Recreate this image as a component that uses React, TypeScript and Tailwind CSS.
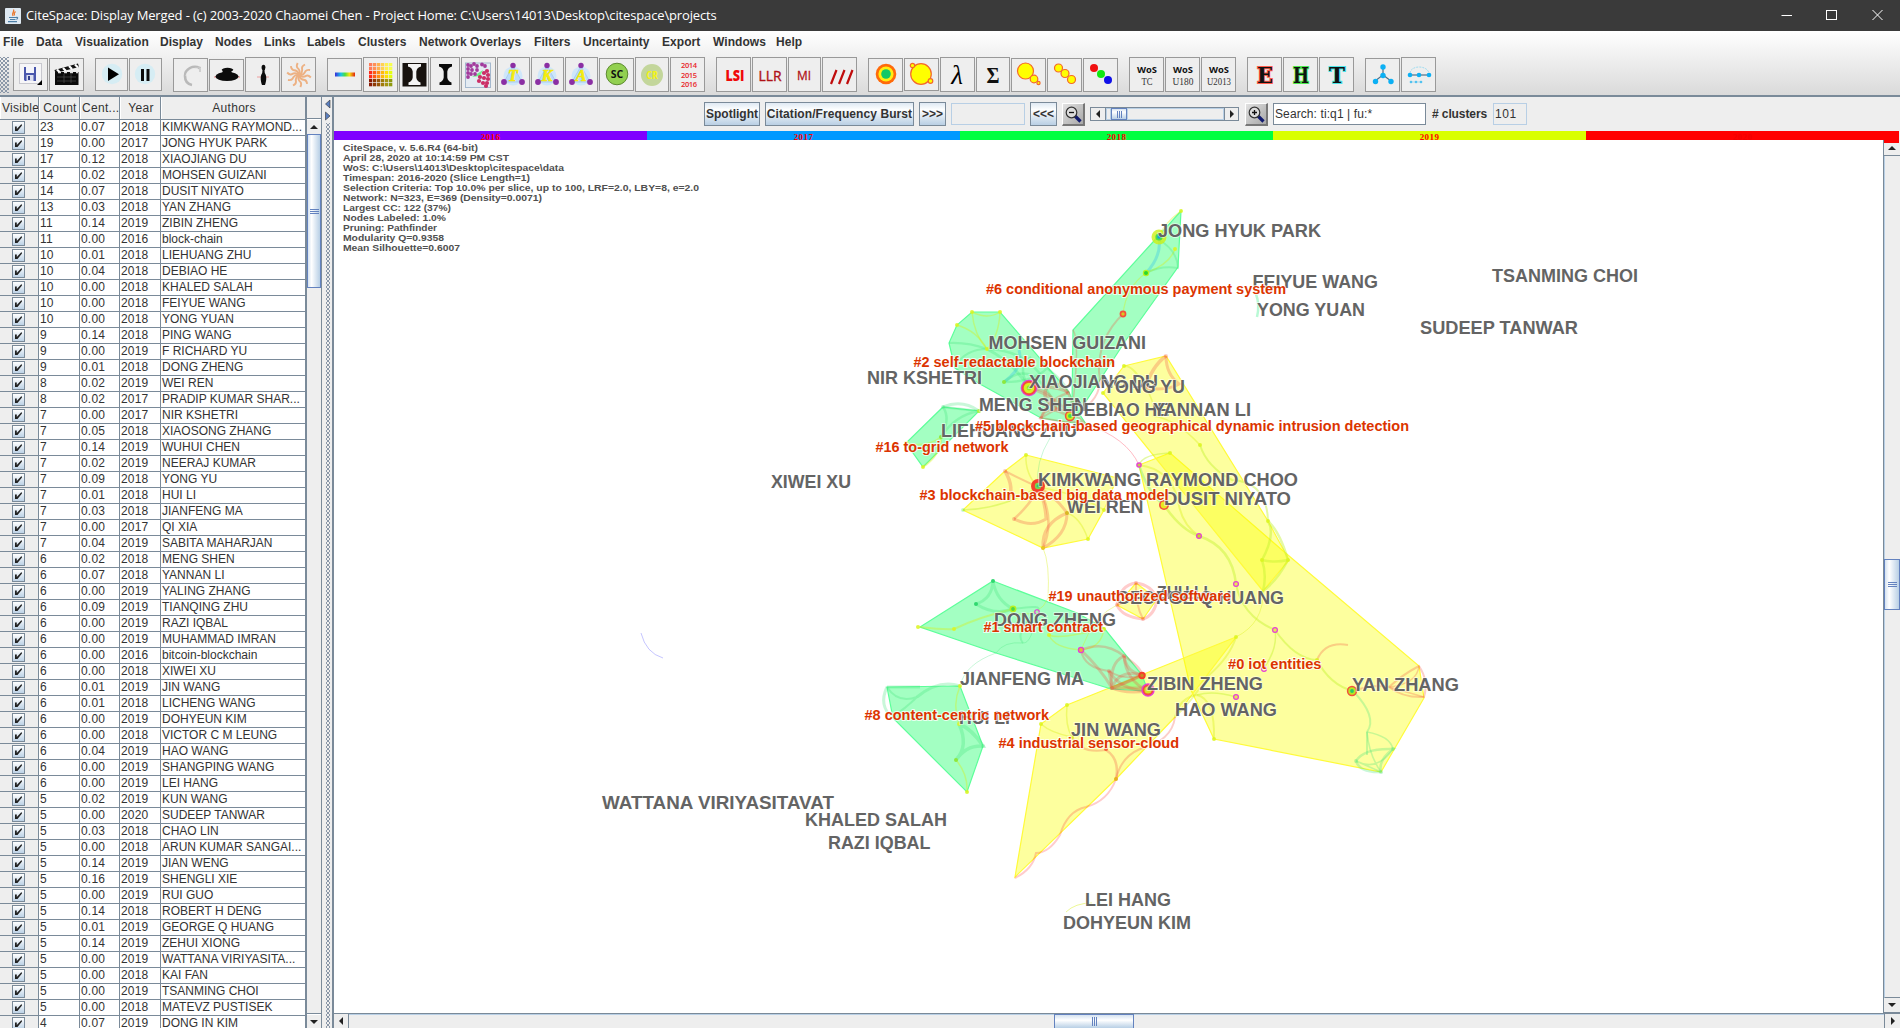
import React from "react";

const MENU: [string, string][] = [
  ["File", "w-[33px]"],
  ["Data", "w-[39px]"],
  ["Visualization", "w-[85px]"],
  ["Display", "w-[55px]"],
  ["Nodes", "w-[49px]"],
  ["Links", "w-[43px]"],
  ["Labels", "w-[51px]"],
  ["Clusters", "w-[61px]"],
  ["Network Overlays", "w-[115px]"],
  ["Filters", "w-[49px]"],
  ["Uncertainty", "w-[79px]"],
  ["Export", "w-[51px]"],
  ["Windows", "w-[63px]"],
  ["Help", "w-[40px]"],
];

const ROWS = `23|0.07|2018|KIMKWANG RAYMOND...
19|0.00|2017|JONG HYUK PARK
17|0.12|2018|XIAOJIANG DU
14|0.02|2018|MOHSEN GUIZANI
14|0.07|2018|DUSIT NIYATO
13|0.03|2018|YAN ZHANG
11|0.14|2019|ZIBIN ZHENG
11|0.00|2016|block-chain
10|0.01|2018|LIEHUANG ZHU
10|0.04|2018|DEBIAO HE
10|0.00|2018|KHALED SALAH
10|0.00|2018|FEIYUE WANG
10|0.00|2018|YONG YUAN
9|0.14|2018|PING WANG
9|0.00|2019|F RICHARD YU
9|0.01|2018|DONG ZHENG
8|0.02|2019|WEI REN
8|0.02|2017|PRADIP KUMAR SHAR...
7|0.00|2017|NIR KSHETRI
7|0.05|2018|XIAOSONG ZHANG
7|0.14|2019|WUHUI CHEN
7|0.02|2019|NEERAJ KUMAR
7|0.09|2018|YONG YU
7|0.01|2018|HUI LI
7|0.03|2018|JIANFENG MA
7|0.00|2017|QI XIA
7|0.04|2019|SABITA MAHARJAN
6|0.02|2018|MENG SHEN
6|0.07|2018|YANNAN LI
6|0.00|2019|YALING ZHANG
6|0.09|2019|TIANQING ZHU
6|0.00|2019|RAZI IQBAL
6|0.00|2019|MUHAMMAD IMRAN
6|0.00|2016|bitcoin-blockchain
6|0.00|2018|XIWEI XU
6|0.01|2019|JIN WANG
6|0.01|2018|LICHENG WANG
6|0.00|2019|DOHYEUN KIM
6|0.00|2018|VICTOR C M LEUNG
6|0.04|2019|HAO WANG
6|0.00|2019|SHANGPING WANG
6|0.00|2019|LEI HANG
5|0.02|2019|KUN WANG
5|0.00|2020|SUDEEP TANWAR
5|0.03|2018|CHAO LIN
5|0.00|2018|ARUN KUMAR SANGAI...
5|0.14|2019|JIAN WENG
5|0.16|2019|SHENGLI XIE
5|0.00|2019|RUI GUO
5|0.14|2018|ROBERT H DENG
5|0.01|2019|GEORGE Q HUANG
5|0.14|2019|ZEHUI XIONG
5|0.00|2019|WATTANA VIRIYASITA...
5|0.00|2018|KAI FAN
5|0.00|2019|TSANMING CHOI
5|0.00|2018|MATEVZ PUSTISEK
4|0.07|2019|DONG IN KIM`
  .split("\n")
  .map((r) => r.split("|"));

/* ---------- toolbar icons, drawn on a 35 x 35 grid ---------- */

const txt = (s: string, x: number, y: number, size: number, fill: string, o: any = {}) => (
  <text x={x} y={y} fontSize={size} fill={fill} textAnchor="middle" fontFamily="'Open Sans', sans-serif" {...o}>
    {s}
  </text>
);

const triangle = (s: string) => (
  <g>
    <circle cx="17" cy="19" r="9.5" fill="#cfe7fa" />
    <path d="M17 9L8 25H26Z" fill="#bcdcf8" stroke="#a9cdf2" />
    <circle cx="17" cy="8.500" r="2.700" fill="#8b2fa3" />
    <circle cx="8" cy="25" r="2.900" fill="#8b2fa3" />
    <circle cx="26" cy="25" r="2.900" fill="#8b2fa3" />
    {txt(s, 17, 24, 16, "#f7ee10", { fontFamily: "'Liberation Serif', serif", fontStyle: "italic", fontWeight: 700, stroke: "#f3e80c", strokeWidth: 0.7 })}
  </g>
);

const wos = (s: string) => (
  <g>
    {txt("WoS", 18, 16, 9.5, "#111", { fontWeight: 700, textLength: 20, lengthAdjust: "spacingAndGlyphs" })}
    {txt(s, 18, 28, 10, "#333", {
      fontFamily: "'Liberation Serif', serif",
      textLength: s.length < 3 ? 11 : s.length < 5 ? 21 : 24,
      lengthAdjust: "spacingAndGlyphs",
    })}
  </g>
);

const slab = (s: string, glow: string) => (
  <text x="18" y="26" fontSize="22" fontWeight="700" textAnchor="middle" fill="#111" stroke={glow} strokeWidth="2" textLength="16" lengthAdjust="spacingAndGlyphs" style={{ paintOrder: "stroke" }} fontFamily="'DejaVu Serif', serif">
    {s}
  </text>
);

const gridCells = () => {
  const out: React.ReactNode[] = [];
  const top = ["#ff7a5a", "#ff8f57", "#ffb04e", "#ffd24e", "#fff04e", "#f6ff4e"];
  const mid = ["#ff2a1a", "#ff5a12", "#ff8c10", "#ffb80c", "#ffe000", "#e4ff10"];
  const low = ["#8a1c05", "#8f3a05", "#97560a", "#a07a0a", "#a49410", "#8f9a10"];
  for (let r = 0; r < 6; r++)
    for (let c = 0; c < 6; c++) {
      const pal = r < 2 ? top : r < 4 ? mid : low;
      out.push(<rect key={r * 6 + c} x={6 + c * 4} y={6 + r * 4} width="3.3" height="3.3" fill={pal[c]} />);
    }
  return out;
};

const FLOPPY = (
  <g>
    <rect x="6.500" y="6.500" width="22" height="20" fill="#f6f6f8" stroke="#c8c8cf" />
    <path d="M11 10H23V24H12L11 23Z" fill="#4a57ac" />
    <rect x="13" y="10" width="8" height="6" fill="#f4f5fb" />
    <rect x="13.500" y="18" width="7" height="6" fill="#dcdff0" />
    <rect x="15" y="19" width="2" height="4" fill="#333f8c" />
    <path d="M29 23V28H24Z" fill="#000" />
  </g>
);
const CLAP = (
  <g>
    <path d="M6 15H29.500V28H6Z" fill="#0b0b0b" />
    <path d="M5.500 13L29 6.500L30 10L6.500 16Z" fill="#111" />
    <path d="M8 12.500l3 3M14 11l3 3M20 9l3 3M26 7.500l3 3" stroke="#fff" strokeWidth="2.2" />
    <path d="M9 15.500h3M15 15.500h3M21 15.500h3M27 15.500h2" stroke="#ddd" strokeWidth="1.500" />
    <path d="M8 20h19M8 24h19M15 17v9M22 17v9" stroke="#666" strokeWidth=".5" />
  </g>
);
const PLAY = (
  <g>
    <circle cx="18" cy="17" r="10.200" fill="#d6edf4" />
    <path d="M14 10.500V24L25 17.200Z" fill="#000" />
  </g>
);
const PAUSE = (
  <g>
    <circle cx="17" cy="17" r="10.200" fill="#d6edf4" />
    <path d="M13 12h3v12h-3zM18.500 12h3v12h-3z" fill="#0a0a0a" />
  </g>
);
const HOOK = (
  <g fill="none">
    <path d="M26.500 11C20 8 12 12 12 19C12 24 14 27 19 28" stroke="#b9b9b9" strokeWidth="2.600" />
    <path d="M27 10v5M22 11l6 -.5" stroke="#c6c6c6" strokeWidth="1.500" />
    <path d="M25 12C20 10 14 13 13 19" stroke="#ededed" strokeWidth=".8" />
  </g>
);
const UFO = (
  <g fill="#0c0c0c">
    <path d="M5 20H31" stroke="#e66" strokeWidth=".8" />
    <ellipse cx="18" cy="19.500" rx="11.500" ry="4.600" />
    <ellipse cx="18.500" cy="12.800" rx="5.800" ry="2" />
    <path d="M14 13H22L23 17H13Z" />
  </g>
);
const PIN = (
  <g fill="#0c0c0c">
    <path d="M12 20H24" stroke="#e88" strokeWidth=".8" />
    <ellipse cx="18.500" cy="10.500" rx="1.900" ry="2.800" />
    <path d="M17.600 12h1.800l.4 4C22 19 21.500 24 20 28H17C15.500 24 15 19 17.200 16Z" />
  </g>
);
const SWIRL = (
  <g fill="none" stroke="#edb183" strokeWidth="1.900">
    {[0, 36, 72, 108, 144, 180, 216, 252, 288, 324].map((a) => (
      <path key={a} d="M18 18Q22 16 21 11Q21 9 24 7.500" transform={`rotate(${a} 18 18)`} />
    ))}
  </g>
);
const RAINBOW = (
  <g>
    <defs>
      <linearGradient id="rb">
        <stop offset="0" stopColor="#3a2bd8" />
        <stop offset=".3" stopColor="#18c5ea" />
        <stop offset=".5" stopColor="#4ade40" />
        <stop offset=".72" stopColor="#f5e410" />
        <stop offset="1" stopColor="#e02010" />
      </linearGradient>
    </defs>
    <rect x="8" y="15.500" width="20" height="4" fill="url(#rb)" />
  </g>
);
const vase = (c: string) => (
  <path d="M9 7H22V9.500C19 10 17.800 12 17.300 14.500V20.500C17.600 23 19 24.500 21.500 25.500V28H9.500V25.500C12 24.500 13.400 23 13.700 20.500V14.500C13.200 12 12 10 9 9.500Z" fill={c} />
);
const HOUR_DARK = (
  <g>
    <rect x="3.500" y="6" width="24" height="23.500" fill="#17120e" />
    {vase("#f4f4f4")}
    <path d="M14.300 13h2.500v8h-2.500z" fill="#f4f4f4" />
  </g>
);
const TIMELINE = (
  <g>
    <rect x="4.500" y="6" width="25" height="24.500" fill="#e4ebf2" stroke="#a4b8ce" />
    <path d="M11 20L22 13L19 19Z" fill="#6cf08a" />
    {[[7, 8], [10, 9], [13, 7], [16, 9], [21, 7.500], [24, 9], [7, 12], [11, 13], [16, 13], [7, 16], [10, 17], [7, 20], [14, 17]].map(([x, y], i) => (
      <circle key={i} cx={x} cy={y} r="1.900" fill="#a23a9c" />
    ))}
    {[[26, 14], [23, 16], [27, 18], [19, 20], [23, 21], [27, 22], [18, 24], [22, 26], [26, 26], [25, 29]].map(([x, y], i) => (
      <circle key={i} cx={x} cy={y} r="2.100" fill="#cc2e66" />
    ))}
  </g>
);
const bubble = (x: number, y: number, r: number) => <circle key={`${x}-${y}`} cx={x} cy={y} r={r} fill="#ff0" stroke="#f4692a" strokeWidth="1.200" />;

type Tool = { w: string; h?: string; art: React.ReactNode };
const GROUPS: Tool[][] = [
  [
    { w: "w-[35px]", h: "h-[33px]", art: FLOPPY },
    { w: "w-[35px]", h: "h-[33px]", art: CLAP },
  ],
  [
    { w: "w-[33px]", h: "h-[33px]", art: PLAY },
    { w: "w-[33px]", h: "h-[33px]", art: PAUSE },
  ],
  [
    { w: "w-[35px]", h: "h-[34px]", art: HOOK },
    { w: "w-[35px]", h: "h-[32px]", art: UFO },
    { w: "w-[35px]", art: PIN },
    { w: "w-[35px]", art: SWIRL },
  ],
  [
    { w: "w-[35px]", h: "h-[33px]", art: RAINBOW },
    { w: "w-[35px]", art: gridCells() },
    { w: "w-[30px]", art: HOUR_DARK },
    { w: "w-[30px]", art: vase("#0a0a0a") },
    { w: "w-[35px]", art: TIMELINE },
    { w: "w-[33px]", art: triangle("T") },
    { w: "w-[33px]", art: triangle("K") },
    { w: "w-[33px]", art: triangle("A") },
    {
      w: "w-[35px]",
      h: "h-[33px]",
      art: (
        <g>
          <circle cx="18" cy="17" r="10.800" fill="#92d050" stroke="#5d8a31" />
          {txt("SC", 18, 21, 10.5, "#111", { fontWeight: 700, textLength: 12.5, lengthAdjust: "spacingAndGlyphs" })}
        </g>
      ),
    },
    {
      w: "w-[34px]",
      art: (
        <g>
          <circle cx="17" cy="18" r="11" fill="#c3d69b" />
          {txt("CR", 17, 22, 10.5, "#f4f410", { fontWeight: 700, textLength: 11.500, lengthAdjust: "spacingAndGlyphs" })}
        </g>
      ),
    },
    {
      w: "w-[35px]",
      art: (
        <g>
          {["2014", "2015", "2016"].map((y, i) => (
            <React.Fragment key={y}>{txt(y, 19, 11 + i * 9.5, 7.5, "#e8262a", { fontWeight: 600, textLength: 16 })}</React.Fragment>
          ))}
        </g>
      ),
    },
  ],
  [
    { w: "w-[35px]", art: txt("LSI", 19, 24, 15.500, "#f00808", { fontWeight: 800, textLength: 19, lengthAdjust: "spacingAndGlyphs" }) },
    { w: "w-[35px]", art: txt("LLR", 18, 24, 14.500, "#b01217", { fontWeight: 400, stroke: "#b01217", strokeWidth: 0.4, textLength: 23, lengthAdjust: "spacingAndGlyphs" }) },
    { w: "w-[33px]", art: txt("MI", 17, 23, 13.500, "#b01217", { stroke: "#b01217", strokeWidth: 0.3, textLength: 14, lengthAdjust: "spacingAndGlyphs" }) },
    { w: "w-[35px]", art: <path d="M9 27L14.500 13M17 27L22.500 13M25 27L30.500 13" stroke="#c00c0c" strokeWidth="2.200" /> },
  ],
  [
    {
      w: "w-[35px]",
      h: "h-[34px]",
      art: (
        <g>
          <circle cx="18" cy="17" r="10.300" fill="#ff6a0a" />
          <circle cx="18" cy="17" r="7.600" fill="#ffee10" />
          <circle cx="18" cy="17" r="4.800" fill="#12c866" />
        </g>
      ),
    },
    { w: "w-[35px]", h: "h-[33px]", art: <g>{bubble(17, 17, 10.3)}{bubble(8.5, 8.5, 2.2)}{bubble(26.500, 24, 2.300)}</g> },
    { w: "w-[35px]", art: txt("λ", 17, 27, 27, "#000", { fontFamily: "'Liberation Serif', serif", fontStyle: "italic" }) },
    { w: "w-[34px]", art: txt("Σ", 17, 25.500, 23, "#111", { fontFamily: "'Liberation Serif', serif", fontWeight: 700, textLength: 13, lengthAdjust: "spacingAndGlyphs" }) },
    { w: "w-[35px]", h: "h-[34px]", art: <g>{bubble(14.500, 14, 8)}{bubble(23, 22, 3.800)}{bubble(27.500, 26, 1.600)}</g> },
    { w: "w-[35px]", h: "h-[34px]", art: <g>{bubble(11.500, 11, 4)}{bubble(18, 16.500, 4)}{bubble(24.500, 22.500, 4)}</g> },
    {
      w: "w-[35px]",
      h: "h-[34px]",
      art: (
        <g>
          <circle cx="11" cy="11" r="4" fill="#f01010" />
          <circle cx="18" cy="17" r="4" fill="#10e810" />
          <circle cx="25" cy="23" r="4" fill="#1010e8" />
        </g>
      ),
    },
  ],
  [
    { w: "w-[35px]", art: wos("TC") },
    { w: "w-[35px]", art: wos("U180") },
    { w: "w-[35px]", art: wos("U2013") },
  ],
  [
    { w: "w-[35px]", art: slab("E", "#ff5a4a") },
    { w: "w-[35px]", art: slab("H", "#4ae84a") },
    { w: "w-[35px]", art: slab("T", "#4ae4e8") },
  ],
  [
    {
      w: "w-[35px]",
      h: "h-[34px]",
      art: (
        <g>
          <path d="M18 10V18L10 24M18 18L26 24" stroke="#4d6f86" strokeWidth="1.200" fill="none" />
          {[[18, 10], [18, 18.500], [10.500, 24.500], [26, 24.500]].map(([x, y]) => <circle key={x + y} cx={x} cy={y} r="2.700" fill="#0cb0f4" />)}
        </g>
      ),
    },
    {
      w: "w-[35px]",
      art: (
        <g>
          <path d="M9 16C10 8 26 8 28 16" stroke="#9fdcf0" fill="none" strokeDasharray="2 1" />
          <path d="M9 18H28" stroke="#4d6f86" strokeWidth="1.200" />
          {[9, 18, 28].map((x) => <circle key={x} cx={x} cy="18" r="2.300" fill="#0cb0f4" />)}
          {[10, 15, 20].map((x) => <circle key={x} cx={x} cy="25" r="1.300" fill="#3fbcf0" />)}
          <path d="M9 25H21" stroke="#7fd0f0" strokeWidth=".6" />
        </g>
      ),
    },
  ],
];

/* ---------- graph ---------- */

const GREEN = "rgba(0,255,85,.36)";
const YELLOW = "rgba(250,255,0,.38)";

const HULLS: [string, string, string][] = [
  ["1139,465 1170,453 1282,550 1419,666 1424,698 1381,772 1214,739 1191,690", YELLOW, "#fffb3a"],
  ["1124,366 1166,356 1268,521 1289,560 1263,591 1103,393", YELLOW, "#fffb3a"],
  ["1026,455 1117,478 1104,510 1088,539 1043,548 963,510 1005,471", YELLOW, "#fffb3a"],
  ["1236,637 1067,705 1041,724 1015,877 1116,779 1175,717", YELLOW, "#fffb3a"],
  ["1136,583 1157,599 1143,619 1117,605", YELLOW, "#fffb3a"],
  ["1181,211 1178,267 1126,340 1079,412 1072,404 1073,330 1153,242", GREEN, "#5dff9a"],
  ["972,312 1000,312 1069,392 1078,412 1086,424 1065,422 1041,418 980,384 955,368 949,343 957,325", GREEN, "#5dff9a"],
  ["943,407 979,411 923,467 906,443", GREEN, "#5dff9a"],
  ["993,581 1077,613 1104,628 1142,675 1148,691 1111,689 996,653 920,627", GREEN, "#5dff9a"],
  ["887,687 960,686 983,746 967,792 893,718", GREEN, "#5dff9a"],
];

const R = "rgba(245,80,60,.28)";
const G = "rgba(60,225,120,.28)";
const Y = "rgba(215,240,20,.38)";
const L = "rgba(190,240,40,.42)";
const P = "rgba(255,40,40,.24)";
const B = "rgba(40,190,235,.32)";

const LINKS: [string, string, number][] = [
  ["M1181 211Q1163 224 1159 237", Y, 1.5],
  ["M1159 237Q1162 256 1146 273", B, 3],
  ["M1175 249Q1170 264 1146 273", Y, 1.5],
  ["M1159 240Q1177 250 1178 268Q1161 265 1146 273", G, 2],
  ["M1146 273Q1126 287 1123 314", Y, 1.2],
  ["M1123 314Q1098 338 1099 372Q1104 395 1082 410", R, 2],
  ["M1073 330Q1080 340 1073 403", R, 1.5],
  ["M972 312Q974 335 987 349", Y, 1.5],
  ["M1000 312Q999 336 987 349", Y, 1.5],
  ["M972 312Q988 320 1000 312", Y, 1.5],
  ["M957 325Q977 331 987 349", Y, 1.5],
  ["M949 343Q968 342 987 349", G, 2],
  ["M955 366Q966 349 987 349", G, 2],
  ["M987 349Q1013 362 1029 388", G, 3],
  ["M987 349Q1026 350 1044 380", G, 2.5],
  ["M1019 350Q1024 368 1004 382", B, 3],
  ["M1004 382Q1035 382 1047 368Q1067 384 1068 393", G, 2.5],
  ["M1004 382Q1034 356 1057 409", G, 2.5],
  ["M1029 388Q1016 366 1031 357", G, 2.5],
  ["M1029 388Q1059 386 1068 393", R, 2.5],
  ["M1029 388Q1055 390 1056 409", R, 2.5],
  ["M1057 409Q1040 399 1047 387Q1060 380 1068 393", R, 3.5],
  ["M1041 418Q1047 400 1068 393Q1077 411 1070 417", R, 2.5],
  ["M1041 418Q1047 403 1070 417Q1062 399 1029 388", R, 2.5],
  ["M1057 409L1041 418L1065 422Q1080 421 1086 424Q1072 410 1057 409", R, 2],
  ["M943 407Q962 399 979 411", G, 3],
  ["M943 407L979 411Q955 415 941 437Q951 419 943 407", G, 2.5],
  ["M906 443Q926 448 941 437", Y, 1.5],
  ["M941 437Q941 455 923 467", Y, 2],
  ["M1050 438Q1035 462 1038 487", G, 1],
  ["M1086 424Q1127 438 1139 465", "rgba(255,30,60,.3)", 1],
  ["M1026 455Q1025 474 1038 487", Y, 1.5],
  ["M1005 471Q1018 478 1038 487", R, 2],
  ["M1005 471Q1015 488 1008 501", R, 3.5],
  ["M963 510Q1003 509 1038 487", L, 1.5],
  ["M1038 487Q1033 502 1014 519", R, 2.5],
  ["M1014 519Q1032 528 1046 519Q1045 501 1038 487", R, 3],
  ["M1043 548Q1056 518 1038 487", R, 2.5],
  ["M1043 548Q1067 535 1067 513Q1056 497 1038 487", R, 3],
  ["M1067 513Q1041 524 1043 548", R, 3],
  ["M1067 513Q1080 517 1088 539", Y, 1.5],
  ["M1104 510Q1079 494 1038 487", Y, 1.5],
  ["M1043 548Q1050 563 1048 598Q1041 616 1018 614", Y, 1],
  ["M1139 465Q1143 454 1170 453", L, 1.5],
  ["M1139 465Q1148 493 1164 505", G, 2.5],
  ["M1139 465Q1170 469 1178 500Q1181 524 1199 536", Y, 2],
  ["M1166 356Q1152 366 1145 389", R, 3.5],
  ["M1166 356Q1166 374 1179 384Q1168 391 1145 388", R, 3],
  ["M1124 366Q1134 365 1145 388", Y, 2],
  ["M1145 388Q1155 399 1153 416Q1176 419 1200 445", Y, 1.5],
  ["M1200 445Q1207 467 1232 480Q1267 482 1268 521", L, 2],
  ["M1164 505Q1181 530 1199 536Q1232 547 1236 584", L, 2.5],
  ["M1268 521Q1276 534 1262 560Q1275 563 1288 560Q1280 532 1268 521", L, 2.5],
  ["M1262 560Q1267 575 1263 591Q1277 581 1288 560", L, 2.5],
  ["M1236 584Q1242 616 1275 630Q1295 659 1317 660", L, 2],
  ["M1236 637Q1264 623 1263 591", Y, 1],
  ["M1275 630Q1278 648 1264 668", L, 1.5],
  ["M1317 660Q1325 641 1348 645", R, 2],
  ["M1317 660Q1330 685 1353 691", L, 2],
  ["M1353 691Q1378 717 1367 732V755", G, 2],
  ["M1356 761Q1364 748 1393 749Q1378 760 1381 772Q1360 773 1356 761", G, 2.5],
  ["M1367 732Q1390 736 1393 749M1367 732Q1369 755 1381 772M1356 761Q1377 772 1393 749M1356 761L1381 772", G, 1.6],
  ["M1353 691Q1375 684 1389 687Q1402 675 1419 666Q1429 681 1424 697Q1403 698 1389 687", R, 2],
  ["M1419 666Q1417 684 1389 687L1424 697", R, 1.5],
  ["M1136 583Q1120 585 1117 605M1136 583Q1152 585 1157 599M1157 599Q1155 615 1143 619M1117 605Q1122 617 1143 619", P, 3],
  ["M1136 583Q1135 604 1143 619M1117 605Q1138 597 1157 599", R, 2],
  ["M1117 605Q1094 615 1081 650", Y, 1],
  ["M920 627Q945 630 954 629Q979 617 1013 609", Y, 2],
  ["M993 581Q992 599 976 604M993 581Q996 600 1013 609Q995 616 976 604", G, 3],
  ["M1013 609Q1045 604 1037 611Q1014 633 1023 643", G, 2],
  ["M1037 611Q1032 644 1023 643Q1004 641 996 653Q965 664 960 686", G, 1],
  ["M1049 635Q1054 648 1081 650Q1102 648 1104 628Q1060 640 1049 635", Y, 1.5],
  ["M1081 650Q1104 640 1124 656Q1141 667 1142 675", R, 2.5],
  ["M1081 650Q1084 668 1109 671Q1124 681 1142 675", R, 2],
  ["M1081 650Q1100 668 1112 688Q1124 694 1148 691", R, 3],
  ["M1124 656Q1109 663 1112 688Q1132 681 1142 675Q1126 672 1124 656", R, 3],
  ["M1109 671Q1120 690 1148 691Q1126 681 1124 656", R, 3],
  ["M1109 671L1112 688H1148M1112 688Q1119 669 1142 675L1112 688", R, 3],
  ["M887 687Q898 704 917 697Q905 709 893 716", G, 2],
  ["M887 687Q878 706 893 718M887 687H920M917 697Q939 679 960 686", G, 3],
  ["M960 686Q952 705 959 724", Y, 1.5],
  ["M959 724Q969 746 956 760Q966 745 983 746Q972 729 959 724", G, 3.5],
  ["M956 760Q968 774 967 792", Y, 1.5],
  ["M1067 705Q1065 726 1072 737Q1051 733 1041 724", Y, 1.5],
  ["M1072 737Q1080 754 1106 750", R, 2],
  ["M1106 750Q1120 759 1116 779", R, 2.5],
  ["M1116 779Q1121 757 1140 749Q1172 741 1175 717", R, 2],
  ["M1116 779Q1108 801 1086 807Q1067 811 1060 835Q1049 853 1036 853Q1033 869 1015 878", P, 2],
  ["M1175 717Q1193 700 1207 677Q1230 657 1236 637", Y, 2],
  ["M1175 717Q1180 697 1197 695Q1215 699 1214 739", Y, 2],
  ["M1197 695Q1213 690 1236 697", L, 1.5],
  ["M1256 294Q1260 305 1257 317", "rgba(80,240,150,.4)", 2.5],
  ["M641 633Q646 653 663 658", "rgba(90,90,255,.35)", 1],
  ["M1066 912Q1075 903 1092 903", "rgba(215,240,20,.45)", 1],
];

const DOTS: [number, number, string][] = [
  [1181, 211, Y], [1175, 249, Y], [972, 312, Y], [1000, 312, Y], [957, 325, Y], [987, 349, Y], [1004, 382, "#8ee83c"],
  [923, 467, Y], [979, 411, "#b4f03c"], [941, 437, "#8ee83c"], [906, 443, Y], [943, 407, G], [1026, 455, Y], [1088, 539, Y], [1043, 548, "#e8c820"],
  [1104, 510, Y], [1067, 513, "#d8b820"], [963, 510, G], [1166, 356, R], [1124, 366, Y], [1103, 393, Y], [1200, 445, Y], [1170, 453, Y], [1268, 521, Y],
  [1262, 560, Y], [1288, 560, Y], [1236, 637, Y], [1317, 660, Y], [1214, 739, Y], [1393, 749, G], [1356, 761, G], [1381, 772, G], [993, 581, "#30d870"],
  [976, 604, "#30d870"], [954, 629, Y], [918, 627, Y], [1049, 635, Y], [1104, 629, Y], [960, 686, Y], [959, 724, Y], [956, 760, "#8ee83c"],
  [967, 792, Y], [983, 746, G], [1067, 705, Y], [1041, 724, Y], [1072, 737, Y], [1106, 749, "#f2643c"], [1116, 779, "#e8b020"], [1136, 583, R],
  [1143, 619, R], [1117, 605, R], [1124, 656, R], [1109, 671, R], [1112, 688, R], [1068, 393, R], [1057, 409, R], [1041, 418, R], [1014, 519, R], [1005, 471, R],
];

/* x, y, then radius and colour pairs from the outer ring inwards */
const RINGS: [number, number, [number, string][]][] = [
  [1159, 237, [[7.5, "rgba(205,240,20,.8)"], [3.6, "#4ce04c"], [1.8, "#18a0d8"]]],
  [1146, 273, [[3.2, "#b8f020"], [2, "#2ad82a"]]],
  [1123, 314, [[3.4, "#f4503c"], [1.7, "#d8c820"]]],
  [1029, 388, [[8.3, "#e63cd8"], [7.2, "#f4503c"], [5.3, "#d8f020"], [2.4, "#98e828"]]],
  [1070, 416, [[5.2, "#f4503c"], [3.7, "#c8f020"], [2, "#48d848"]]],
  [1038, 486, [[7, "#f4402c"], [3.2, "#78d84c"], [1.5, "#38b878"]]],
  [1164, 505, [[5, "#f4503c"], [3.4, "#e8e820"]]],
  [1139, 465, [[2.8, "#e63cd8"], [1.5, "#c8c850"]]],
  [1199, 536, [[3, "#e63cd8"], [1.8, "#c8d820"]]],
  [1236, 584, [[3, "#e63cd8"], [1.8, "#e8e850"]]],
  [1275, 630, [[3, "#e63cd8"], [1.8, "#e8e850"]]],
  [1264, 669, [[3, "#e63cd8"], [1.8, "#f8f890"]]],
  [1236, 697, [[3, "#e63cd8"], [1.8, "#e8e850"]]],
  [1037, 612, [[2.8, "#e63cd8"], [1.7, "#a8f8b0"]]],
  [1081, 650, [[3.2, "#e63cd8"], [2, "#e8b040"]]],
  [1013, 609, [[3.4, "#b8f020"], [1.9, "#48d848"]]],
  [1142, 675.5, [[3.7, "#f4402c"], [1.7, "#c88c20"]]],
  [1148, 690, [[6.7, "#e63cd8"], [5.4, "#f4503c"], [3.6, "#d8e020"]]],
  [1352, 691, [[5.2, "#f4503c"], [3.7, "#b8e820"], [1.9, "#28c868"]]],
];

const NAMES: [string, number, number, number][] = [
  ["JONG HYUK PARK", 1158, 1321, 237],
  ["FEIYUE WANG", 1252.5, 1378, 288],
  ["YONG YUAN", 1257, 1365, 316],
  ["TSANMING CHOI", 1492, 1638, 282],
  ["SUDEEP TANWAR", 1420, 1578, 333.5],
  ["MOHSEN GUIZANI", 988.5, 1146, 348.5],
  ["NIR KSHETRI", 867, 982, 383.5],
  ["XIAOJIANG DU", 1029, 1158, 387.5],
  ["YONG YU", 1103, 1185, 393],
  ["MENG SHEN", 979, 1087, 410.5],
  ["DEBIAO HE", 1071, 1169, 415.5],
  ["YANNAN LI", 1153, 1251, 415.5],
  ["LIEHUANG ZHU", 941, 1077, 436.5],
  ["XIWEI XU", 771, 851, 488],
  ["KIMKWANG RAYMOND CHOO", 1038, 1298, 486],
  ["DUSIT NIYATO", 1164, 1291, 505],
  ["WEI REN", 1067, 1143.5, 513],
  ["ZHU LI", 1157, 1208, 598.5],
  ["GEORGE Q HUANG", 1116, 1284, 604],
  ["DONG ZHENG", 994, 1116, 625.5],
  ["JIANFENG MA", 960, 1084, 685],
  ["HUI LI", 959, 1010, 723.5],
  ["ZIBIN ZHENG", 1147, 1263, 690],
  ["HAO WANG", 1175, 1277, 715.5],
  ["YAN ZHANG", 1352, 1459, 691],
  ["JIN WANG", 1071, 1161, 736],
  ["WATTANA VIRIYASITAVAT", 602, 834, 809],
  ["KHALED SALAH", 805, 947, 826],
  ["RAZI IQBAL", 828, 930.5, 848.5],
  ["LEI HANG", 1085, 1171, 905.5],
  ["DOHYEUN KIM", 1063, 1191, 929],
];

const CLUSTERS: [string, number, number, number][] = [
  ["#6 conditional anonymous payment system", 986, 1286, 293.5],
  ["#2 self-redactable blockchain", 913.5, 1115, 367],
  ["#5 blockchain-based geographical dynamic intrusion detection", 975, 1409, 430.5],
  ["#16 to-grid network", 875.5, 1008.5, 452],
  ["#3 blockchain-based big data model", 919.5, 1168.5, 499.5],
  ["#19 unauthorized software", 1048.5, 1231, 601],
  ["#1 smart contract", 983.5, 1103, 632],
  ["#0 iot entities", 1228, 1321.5, 669],
  ["#8 content-centric network", 864.5, 1049, 720],
  ["#4 industrial sensor-cloud", 998.5, 1179, 748],
];

const INFO = [
  "CiteSpace, v. 5.6.R4 (64-bit)",
  "April 28, 2020 at 10:14:59 PM CST",
  "WoS: C:\\Users\\14013\\Desktop\\citespace\\data",
  "Timespan: 2016-2020 (Slice Length=1)",
  "Selection Criteria: Top 10.0% per slice, up to 100, LRF=2.0, LBY=8, e=2.0",
  "Network: N=323, E=369 (Density=0.0071)",
  "Largest CC: 122 (37%)",
  "Nodes Labeled: 1.0%",
  "Pruning: Pathfinder",
  "Modularity Q=0.9358",
  "Mean Silhouette=0.6007",
];
const INFO_W = [135, 166, 221, 187, 356, 199, 108, 103, 94, 101, 117];

function Graph() {
  return (
    <svg className="block h-[873px] w-[1549px] bg-white" viewBox="334 140 1549 873" fontFamily="'Liberation Sans', Arial, sans-serif" fontWeight="700">
      {HULLS.map(([p, f, s], i) => (
        <polygon key={i} points={p} fill={f} stroke={s} strokeWidth="1.2" />
      ))}
      {LINKS.map(([d, c, w], i) => (
        <path key={i} d={d} fill="none" stroke={c} strokeWidth={w} />
      ))}
      {DOTS.map(([x, y, c], i) => (
        <circle key={i} cx={x} cy={y} r="2" fill={c === Y ? "rgba(220,245,30,.85)" : c} />
      ))}
      {RINGS.map(([x, y, rs], i) => (
        <g key={i}>
          {rs.map(([r, c], j) => (
            <circle key={j} cx={x} cy={y} r={r} fill={c} />
          ))}
        </g>
      ))}
      {NAMES.map(([t, x1, x2, y]) => (
        <text key={t} x={x1} y={y} fontSize="17.5" fill="#646464" stroke="rgba(255,255,255,.6)" strokeWidth="1.6" style={{ paintOrder: "stroke" }} textLength={x2 - x1} lengthAdjust="spacingAndGlyphs">
          {t}
        </text>
      ))}
      {CLUSTERS.map(([t, x1, x2, y]) => (
        <text key={t} x={x1} y={y} fontSize="14" fill="#dc3400" stroke="rgba(255,255,255,.75)" strokeWidth="2" style={{ paintOrder: "stroke" }} textLength={x2 - x1} lengthAdjust="spacingAndGlyphs">
          {t}
        </text>
      ))}
      {INFO.map((t, i) => (
        <text key={t} x="343" y={150.500 + i * 10} fontSize="9" fill="#505050" textLength={INFO_W[i]} lengthAdjust="spacingAndGlyphs">
          {t}
        </text>
      ))}
    </svg>
  );
}

/* ---------- widgets ---------- */

function Arrow({ dir }: { dir: "up" | "down" | "left" | "right" }) {
  const d = { up: "M0 6H8L4 2Z", down: "M0 2H8L4 6Z", left: "M6 0V8L2 4Z", right: "M2 0V8L6 4Z" }[dir];
  return (
    <svg className="size-2" viewBox="0 0 8 8">
      <path d={d} fill="#222" />
    </svg>
  );
}

function Check() {
  return (
    <span className="flex size-[13px] items-center justify-center border border-[#7a8a99] bg-linear-to-b from-white to-[#bdd2e6]">
      <svg className="size-[9px]" viewBox="0 0 9 9">
        <path d="M1 3.5H2.800V6L7.500 1L8 2.500L3.500 8H1Z" fill="#222" />
      </svg>
    </span>
  );
}

function MetalButton({ children, w }: { children: React.ReactNode; w: string }) {
  return (
    <div className={`flex h-6 items-center justify-center whitespace-nowrap border border-[#7a8a99] bg-linear-to-b from-[#dfe9f3] via-[#fdfefe] via-30% to-[#b9cfe4] text-xs font-bold text-[#333] ${w}`}>
      {children}
    </div>
  );
}

function Lens({ sign }: { sign: string }) {
  return (
    <div className="flex size-[23px] items-center justify-center border-r-2 border-b-2 border-t border-l border-t-white border-l-white border-r-[#777] border-b-[#777] bg-linear-to-br from-[#e2e2e2] to-[#a8a8a8]">
      <svg className="size-[20px]" viewBox="0 0 20 20">
        <path d="M12 12L17.500 17.500" stroke="#111a6e" strokeWidth="3.200" />
        <circle cx="8.500" cy="8.500" r="5.300" fill="#dcdcdc" stroke="#333" strokeWidth="1.200" />
        <path d={sign === "+" ? "M6 8.500H11M8.500 6V11" : "M6 8.500H11"} stroke="#111" strokeWidth="1.300" />
      </svg>
    </div>
  );
}

const DOTTED = "bg-[radial-gradient(circle,#8a97a8_0.8px,transparent_0.9px),radial-gradient(circle,#8a97a8_0.8px,transparent_0.9px)] bg-size-[4px_4px] bg-position-[0_0,2px_2px]";

export default function App() {
  return (
    <div className="flex h-[1028px] w-[1900px] flex-col overflow-hidden bg-[#eeeeee] font-['Liberation_Sans',Arial,sans-serif] text-xs text-[#333]">
      <header className="flex h-[31px] shrink-0 items-center bg-[#3a3a3a] text-white">
        <svg className="ml-[5px] size-4" viewBox="0 0 16 16">
          <rect width="16" height="16" rx="1" fill="#dfe9f2" />
          <path d="M8.500 1.500C10 4 6 5 8 8M10.500 3.500C8.500 5 9 6 9.500 7.500" stroke="#e8762c" strokeWidth="1.300" fill="none" />
          <path d="M4 9.500H11M5 11.500H10.500M3 13.700H12M11 9.500Q14 9 11.500 11.500" stroke="#4d7fa6" strokeWidth="1.200" fill="none" />
        </svg>
        <span className="ml-[5px] w-[1740px] whitespace-nowrap font-['Open_Sans',sans-serif] text-[13px] tracking-[-0.14px]">
          CiteSpace: Display Merged - (c) 2003-2020 Chaomei Chen - Project Home: C:\Users\14013\Desktop\citespace\projects
        </span>
        <svg className="h-[31px] w-[134px]" viewBox="0 0 134 31" stroke="#fff" fill="none">
          <path d="M15.500 15.500H26M106.500 10L116.500 20M116.500 10L106.500 20" />
          <rect x="60.500" y="10.500" width="10" height="9" />
        </svg>
      </header>

      <div className="flex h-[66px] shrink-0 flex-col border-b-2 border-[#7a8a99] bg-linear-to-b from-white to-[#dadada]">
        <nav className="flex h-[22px] items-center pl-[3px] font-bold">
          {MENU.map(([m, w]) => (
            <span key={m} className={`shrink-0 whitespace-nowrap tracking-[0.05px] ${w}`}>
              {m}
            </span>
          ))}
        </nav>
        <div className="mt-px flex h-[41px] items-center">
          <div className={`h-9 w-[9px] ${DOTTED}`} />
          <div className="ml-1 flex gap-[11px]">
            {GROUPS.map((g, i) => (
              <div key={i} className="flex items-center gap-px">
                {g.map((t, j) => (
                  <div key={j} className={`flex items-center justify-center overflow-hidden border border-[#999] bg-[#eee] ${t.w} ${t.h ?? "h-[35px]"}`}>
                    <svg className="size-[35px] shrink-0" viewBox={t.w === "w-[30px]" ? "-2 0 35 35" : "0 0 35 35"}>
                      {t.art}
                    </svg>
                  </div>
                ))}
              </div>
            ))}
          </div>
        </div>
      </div>

      <main className="flex min-h-0 flex-1">
        <section className="flex w-[322px] shrink-0 border-r border-[#7a8a99]">
          <div className="w-[307px] overflow-hidden border-r-2 border-[#7a8a99]">
            <div className="grid h-[23px] grid-cols-[39px_41px_40px_41px_1fr] border-b border-b-[#7a8a99] text-[12px] leading-[22px]">
              {["Visible", "Count", "Cent...", "Year", "Authors"].map((h, i) => (
                <div key={h} className={`overflow-hidden whitespace-nowrap border-l border-l-white pl-px text-center tracking-[0.3px] ${i < 4 ? "border-r border-r-[#7a8a99]" : ""}`}>
                  {h}
                </div>
              ))}
            </div>
            {ROWS.map(([c, z, y, a], i) => (
              <div key={i} className="grid h-4 grid-cols-[39px_41px_40px_41px_1fr] border-b border-[#7a8a99] leading-[15px]">
                <div className="flex border-r border-[#7a8a99] pt-px pl-3">
                  <Check />
                </div>
                {[c, z, y].map((v, k) => (
                  <div key={k} className="border-r border-[#7a8a99] bg-white pl-px tracking-[0.2px]">
                    {v}
                  </div>
                ))}
                <div className="whitespace-nowrap bg-white pl-px">{a}</div>
              </div>
            ))}
          </div>
          <div className="flex w-[14px] flex-col">
            <div className="h-[22px] border-b border-[#7a8a99]" />
            <div className="flex h-[15px] items-center justify-center border-t border-white">
              <Arrow dir="up" />
            </div>
            <div className="flex h-[154px] flex-col items-center justify-center gap-px border border-[#6382bf] bg-linear-to-r from-[#d5e2f0] via-white via-30% to-[#b8cfe5]">
              <i className="h-px w-[9px] bg-[#6382bf]" />
              <i className="h-px w-[9px] bg-[#6382bf]" />
              <i className="h-px w-[9px] bg-[#6382bf]" />
            </div>
            <div className="flex-1 border-b border-[#7a8a99]" />
            <div className="flex h-[14px] items-center justify-center border-t border-white">
              <Arrow dir="down" />
            </div>
          </div>
        </section>

        <div className="flex w-[10px] shrink-0 flex-col bg-[#eee] pl-[2px]">
          <svg className="h-[26px] w-2" viewBox="0 0 8 26">
            <path d="M6 3V11L1.500 7Z" fill="#5a7fc0" stroke="#333" strokeWidth=".6" />
            <path d="M1.500 15V23L6 19Z" fill="#5a7fc0" stroke="#333" strokeWidth=".6" />
          </svg>
          <div className={`ml-[2px] w-1 flex-1 ${DOTTED}`} />
        </div>

        <section className="flex min-w-0 flex-1 flex-col border-l-2 border-[#7a8a99]">
          <div className="flex h-[34px] shrink-0 items-center pl-[370px]">
            <MetalButton w="w-[56px]">Spotlight</MetalButton>
            <div className="w-[5px]" />
            <MetalButton w="w-[149px]">
              <span className="tracking-[0.08px]">Citation/Frequency Burst</span>
            </MetalButton>
            <div className="w-[5px]" />
            <MetalButton w="w-[27px]">&gt;&gt;&gt;</MetalButton>
            <div className="ml-[5px] h-[22px] w-[74px] border border-[#b8cfe5]" />
            <div className="w-[5px]" />
            <MetalButton w="w-[27px]">&lt;&lt;&lt;</MetalButton>
            <div className="w-[5px]" />
            <Lens sign="-" />
            <div className="ml-[5px] flex h-[14px] w-[149px] border border-[#7a8a99]">
              <div className="flex w-[15px] items-center justify-center border-r border-[#7a8a99]">
                <Arrow dir="left" />
              </div>
              <div className="w-[5px] border border-[#b8cfe5]" />
              <div className="flex w-4 items-center justify-center gap-px border border-[#6382bf] bg-linear-to-b from-[#d5e2f0] via-white via-30% to-[#b8cfe5]">
                <i className="h-[7px] w-px bg-[#6382bf]" />
                <i className="h-[7px] w-px bg-[#6382bf]" />
                <i className="h-[7px] w-px bg-[#6382bf]" />
              </div>
              <div className="flex-1 border border-[#b8cfe5]" />
              <div className="flex w-[14px] items-center justify-center border-l border-[#7a8a99]">
                <Arrow dir="right" />
              </div>
            </div>
            <div className="w-[6px]" />
            <Lens sign="+" />
            <div className="ml-[5px] flex h-[22px] w-[153px] items-center border border-[#7a8a99] bg-white pl-px tracking-[0.1px]">Search: ti:q1 | fu:*</div>
            <span className="ml-[6px] w-[61px] whitespace-nowrap font-bold tracking-[-0.1px]"># clusters</span>
            <div className="flex h-[22px] w-[34px] items-center border border-[#b8cfe5] pl-px tracking-[0.6px]">101</div>
          </div>

          <div className="grid h-[9px] shrink-0 grid-cols-[313px_313px_313px_313px_313px] text-center font-['Liberation_Serif',serif] text-[9px] leading-[12px] font-bold tracking-[0.4px] text-[#ff0000]">
            <div className="bg-[#7f00ff]">2016</div>
            <div className="bg-[#0099ff]">2017</div>
            <div className="bg-[#00ff40]">2018</div>
            <div className="bg-[#d9ff00]">2019</div>
            <div className="bg-[#ff0000] text-[#f20000]">2020</div>
          </div>

          <div className="flex h-[873px] shrink-0">
            <Graph />
            <div className="flex w-[17px] flex-col border-l border-[#7a8a99]">
              <div className="flex h-4 items-center justify-center border-b border-[#7a8a99]">
                <Arrow dir="up" />
              </div>
              <div className="h-[403px] border-l border-[#b8cfe5]" />
              <div className="flex h-[51px] flex-col items-center justify-center gap-px border border-[#6382bf] bg-linear-to-r from-[#d5e2f0] via-white via-30% to-[#b8cfe5]">
                <i className="h-px w-[9px] bg-[#6382bf]" />
                <i className="h-px w-[9px] bg-[#6382bf]" />
                <i className="h-px w-[9px] bg-[#6382bf]" />
              </div>
              <div className="flex-1 border-b border-l border-b-[#7a8a99] border-l-[#b8cfe5]" />
              <div className="flex h-[15px] items-center justify-center border-b border-[#7a8a99]">
                <Arrow dir="down" />
              </div>
            </div>
          </div>
          <div className="flex min-h-0 flex-1 border-t border-[#7a8a99]">
            <div className="flex w-[15px] items-center justify-center border-r border-[#7a8a99]">
              <Arrow dir="left" />
            </div>
            <div className="w-[705px] border-t border-[#b8cfe5]" />
            <div className="flex w-[80px] items-center justify-center gap-px border border-b-0 border-[#6382bf] bg-linear-to-b from-[#d5e2f0] via-white via-40% to-[#b8cfe5]">
              <i className="h-[9px] w-px bg-[#6382bf]" />
              <i className="h-[9px] w-px bg-[#6382bf]" />
              <i className="h-[9px] w-px bg-[#6382bf]" />
            </div>
            <div className="flex-1 border-t border-[#b8cfe5]" />
            <div className="flex w-4 items-center justify-center border-l border-[#7a8a99]">
              <Arrow dir="right" />
            </div>
          </div>
        </section>
      </main>
    </div>
  );
}
